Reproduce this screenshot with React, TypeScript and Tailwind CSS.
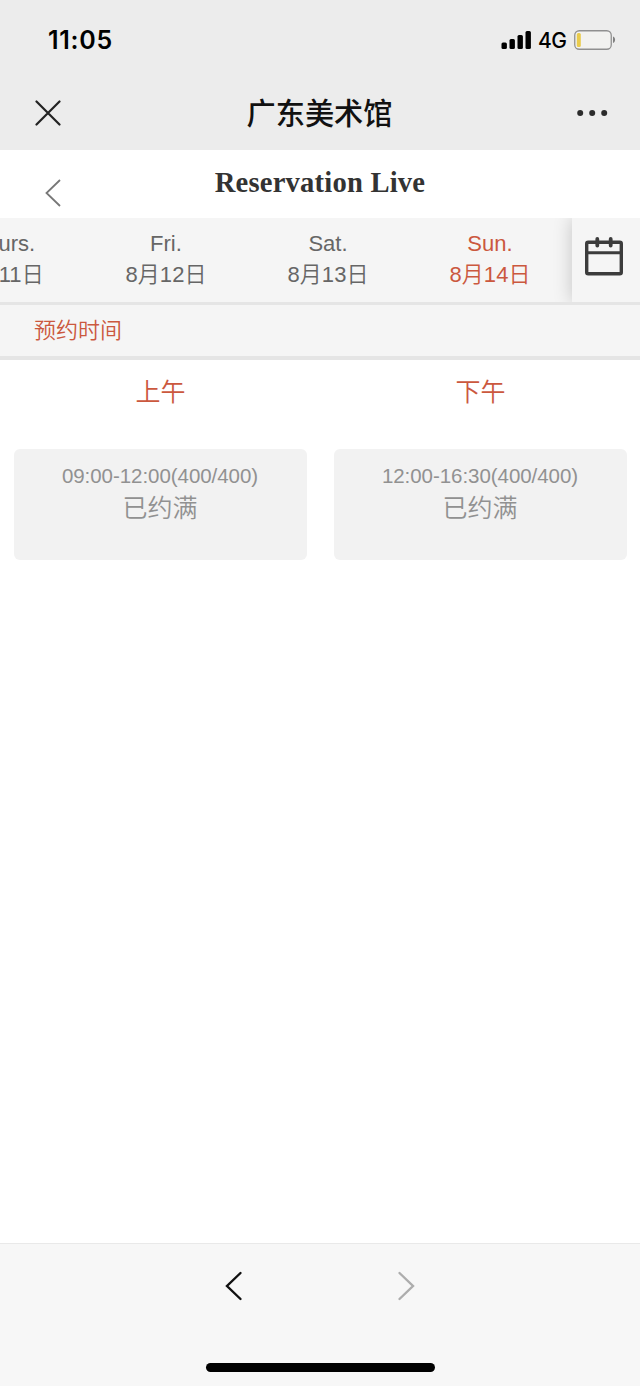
import { FC } from 'react';

interface DayProps {
  name: string;
  date: string;
  active?: boolean;
}

const Day: FC<DayProps> = ({ name, date, active }) => {
  return (
    <button
      className={`flex w-[162px] shrink-0 flex-col items-center pt-[11px] text-[22px] leading-[30.5px] ${
        active ? 'text-[#cb583e]' : 'text-[#666666]'
      }`}
    >
      <span>{name}</span>
      <span className="font-[350] tracking-[0.1px]">{date}</span>
    </button>
  );
};

interface SlotProps {
  title: string;
  time: string;
}

const Slot: FC<SlotProps> = ({ title, time }) => {
  return (
    <div className="flex flex-1 flex-col items-center">
      <h2 className="pl-px text-[25px] leading-[65px] font-[350] text-[#cb583e]">{title}</h2>
      <div className="mt-6 flex h-[111px] w-[293px] flex-col items-center rounded-md bg-[#f2f2f2] pt-[11px] text-[#919191]">
        <span className="text-[20.5px] leading-8 tracking-[-0.05px]">{time}</span>
        <span className="text-[25px] leading-[33px] font-[350]">已约满</span>
      </div>
    </div>
  );
};

const StatusBar: FC = () => {
  return (
    <div className="flex h-[75px] items-center justify-between pt-1 pr-6 pl-12 font-['Inter',sans-serif] text-black">
      <span className="pt-[2px] text-[25px] font-semibold tracking-[0.7px]">11:05</span>
      <div className="flex items-center">
        <svg className="h-[18px] w-[30px]" viewBox="0 0 30 18">
          <rect x="0.5" y="11.5" width="5.4" height="6.5" rx="1.5" />
          <rect x="8.5" y="8" width="5.4" height="10" rx="1.5" />
          <rect x="16.5" y="4" width="5.4" height="14" rx="1.5" />
          <rect x="24.5" y="0" width="5.4" height="18" rx="1.5" />
        </svg>
        <span className="ml-[7px] w-[36px] pt-[2px] text-[21px] font-medium tracking-[-0.5px]">4G</span>
        <svg className="h-5 w-[42px]" viewBox="0 0 42 20" fill="none">
          <rect x="0.75" y="0.75" width="36.5" height="18.5" rx="4.5" fill="#f2f2f0" stroke="#909090" strokeWidth="1.3" />
          <rect x="2.8" y="3" width="4" height="14" rx="1.5" fill="#e9cb4c" />
          <path d="M39 6.5C41.8 7.5 41.8 12 39 13Z" fill="#808080" />
        </svg>
      </div>
    </div>
  );
};

function App() {
  return (
    <div className="flex h-[1386px] w-[640px] flex-col overflow-hidden bg-white font-['Liberation_Sans','Noto_Sans_CJK_SC',sans-serif]">
      <div className="h-[150px] bg-[#ececec]">
        <StatusBar />
        <div className="flex h-[75px] items-center justify-between pr-8 pl-[35px]">
          <svg className="size-[26px]" viewBox="0 0 26 26" stroke="#222" strokeWidth="2.2" strokeLinecap="round">
            <path d="M1.5 1.5l23 23M24.5 1.5l-23 23" />
          </svg>
          <h1 className="pt-[4px] pl-px text-[29.2px] font-medium text-[#111]">广东美术馆</h1>
          <svg className="h-[6px] w-[31px]" viewBox="0 0 31 6" fill="#2b2b2b">
            <circle cx="3.2" cy="3" r="3" />
            <circle cx="15.2" cy="3" r="3" />
            <circle cx="27.2" cy="3" r="3" />
          </svg>
        </div>
      </div>

      <div className="flex h-[68px] justify-between px-[45px]">
        <svg className="mt-[29px] h-7 w-4" viewBox="0 0 16 28" fill="none" stroke="#777" strokeWidth="1.8">
          <path d="M15 1L1.5 14L15 27" />
        </svg>
        <h2 className="font-['Liberation_Serif',serif] text-[28.6px] leading-[65px] font-bold tracking-[0.2px] text-[#333]">
          Reservation Live
        </h2>
        <span className="w-4" />
      </div>

      <div className="flex h-[87px] border-b-3 border-[#e5e5e5] bg-[#f5f5f5]">
        <div className="flex w-[572px] overflow-hidden">
          <div className="-ml-[77px] flex">
            <Day name="Thurs." date="8月11日" />
            <Day name="Fri." date="8月12日" />
            <Day name="Sat." date="8月13日" />
            <Day name="Sun." date="8月14日" active />
          </div>
        </div>
        <button className="z-10 flex h-[84px] w-[68px] justify-center bg-[#f5f5f5] pt-[18px] pr-1 shadow-[0_0_18px_rgba(0,0,0,0.2)] [clip-path:inset(0_0_0_-24px)]">
          <svg className="h-10 w-[38px]" viewBox="0 0 38 40" fill="none" stroke="#3c3c3c" strokeWidth="3.4">
            <rect x="1.7" y="6.2" width="34.6" height="31.5" rx="1.5" />
            <path d="M2 16.8h34" strokeWidth="3" />
            <path d="M12.3 3v6.5M25.7 3v6.5" strokeWidth="3.8" strokeLinecap="round" />
          </svg>
        </button>
      </div>

      <div className="h-[55px] border-b-4 border-[#e5e5e5] bg-[#f5f5f5] pl-[34px] text-[22px] leading-[51px] font-[350] text-[#cb583e]">
        预约时间
      </div>

      <div className="flex flex-1">
        <Slot title="上午" time="09:00-12:00(400/400)" />
        <Slot title="下午" time="12:00-16:30(400/400)" />
      </div>

      <div className="flex h-[143px] flex-col items-center border-t border-[#e9e9e9] bg-[#f7f7f7]">
        <div className="flex h-[84px] w-[190px] items-center justify-between">
          <svg className="h-[30px] w-[18px]" viewBox="0 0 18 30" fill="none" stroke="#111" strokeWidth="2.4" strokeLinecap="round">
            <path d="M15.5 2L2 15L15.5 28" />
          </svg>
          <svg className="h-[30px] w-[18px]" viewBox="0 0 18 30" fill="none" stroke="#adadad" strokeWidth="2.4" strokeLinecap="round">
            <path d="M2.5 2L16 15L2.5 28" />
          </svg>
        </div>
        <div className="mt-[35px] h-[9px] w-[229px] rounded-full bg-black" />
      </div>
    </div>
  );
}

export default App;
